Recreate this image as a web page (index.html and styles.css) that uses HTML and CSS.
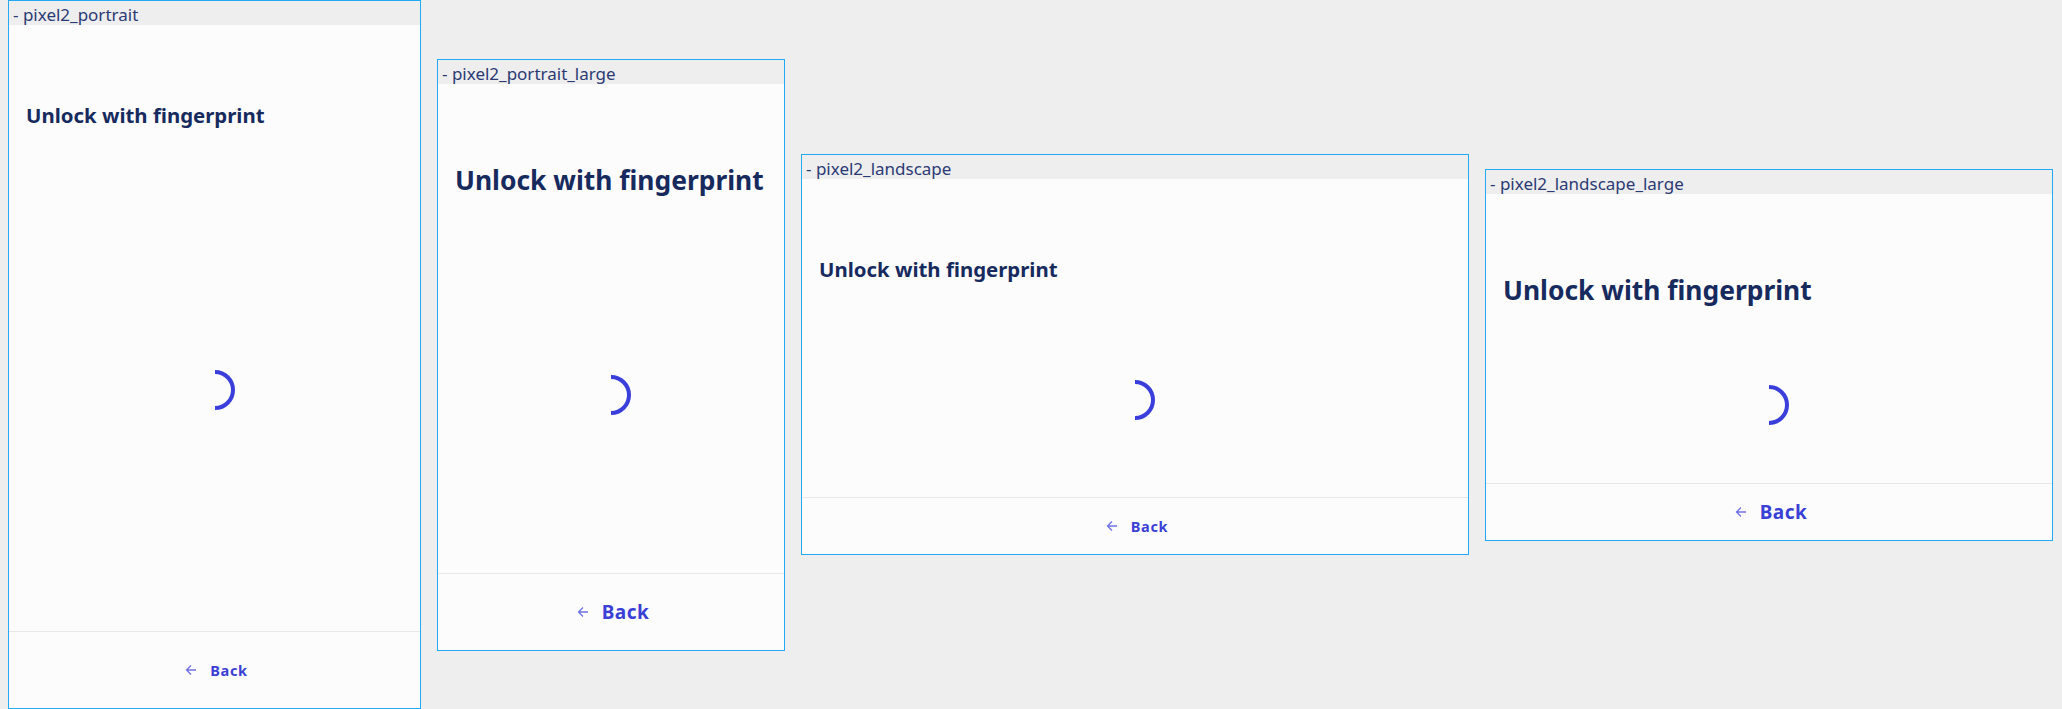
FILE: index.html
```html
<!DOCTYPE html>
<html lang="en">
<head>
<meta charset="utf-8">
<title>Unlock with fingerprint - previews</title>
<link rel="stylesheet" href="styles.css">
</head>
<body>
<main class="canvas">
  <section class="device portrait">
    <div class="label">- pixel2_portrait</div>
    <div class="screen">
      <div class="main">
        <h1 class="title">Unlock with fingerprint</h1>
        <div class="spinner-area">
          <svg class="spinner" viewBox="0 0 40 40" width="40" height="40"><path d="M20 2 A18 18 0 0 1 20 38" fill="none" stroke="#3a3edb" stroke-width="4"/></svg>
        </div>
      </div>
      <div class="footer">
        <button class="back">
          <svg class="arrow" viewBox="0 0 12 12" width="12" height="12"><path d="M11 6H1.5M6 1.5L1.5 6L6 10.5" fill="none" stroke="#6e72e4" stroke-width="1.3"/></svg>
          <span>Back</span>
        </button>
      </div>
    </div>
  </section>

  <section class="device portrait large">
    <div class="label">- pixel2_portrait_large</div>
    <div class="screen">
      <div class="main">
        <h1 class="title">Unlock with fingerprint</h1>
        <div class="spinner-area">
          <svg class="spinner" viewBox="0 0 40 40" width="40" height="40"><path d="M20 2 A18 18 0 0 1 20 38" fill="none" stroke="#3a3edb" stroke-width="4"/></svg>
        </div>
      </div>
      <div class="footer">
        <button class="back">
          <svg class="arrow" viewBox="0 0 12 12" width="12" height="12"><path d="M11 6H1.5M6 1.5L1.5 6L6 10.5" fill="none" stroke="#6e72e4" stroke-width="1.3"/></svg>
          <span>Back</span>
        </button>
      </div>
    </div>
  </section>

  <section class="device landscape">
    <div class="label">- pixel2_landscape</div>
    <div class="screen">
      <div class="main">
        <h1 class="title">Unlock with fingerprint</h1>
        <div class="spinner-area">
          <svg class="spinner" viewBox="0 0 40 40" width="40" height="40"><path d="M20 2 A18 18 0 0 1 20 38" fill="none" stroke="#3a3edb" stroke-width="4"/></svg>
        </div>
      </div>
      <div class="footer">
        <button class="back">
          <svg class="arrow" viewBox="0 0 12 12" width="12" height="12"><path d="M11 6H1.5M6 1.5L1.5 6L6 10.5" fill="none" stroke="#6e72e4" stroke-width="1.3"/></svg>
          <span>Back</span>
        </button>
      </div>
    </div>
  </section>

  <section class="device landscape large">
    <div class="label">- pixel2_landscape_large</div>
    <div class="screen">
      <div class="main">
        <h1 class="title">Unlock with fingerprint</h1>
        <div class="spinner-area">
          <svg class="spinner" viewBox="0 0 40 40" width="40" height="40"><path d="M20 2 A18 18 0 0 1 20 38" fill="none" stroke="#3a3edb" stroke-width="4"/></svg>
        </div>
      </div>
      <div class="footer">
        <button class="back">
          <svg class="arrow" viewBox="0 0 12 12" width="12" height="12"><path d="M11 6H1.5M6 1.5L1.5 6L6 10.5" fill="none" stroke="#6e72e4" stroke-width="1.3"/></svg>
          <span>Back</span>
        </button>
      </div>
    </div>
  </section>
</main>
</body>
</html>
```
FILE: styles.css
```css
* { box-sizing: border-box; }

html, body {
  margin: 0;
  padding: 0;
  background: #eeeeee;
  font-family: "Noto Sans", "Open Sans", sans-serif;
}

.canvas {
  display: flex;
  align-items: center;
  gap: 16px;
  padding: 0 8px;
  height: 709px;
}

.device {
  flex: none;
  display: flex;
  flex-direction: column;
  border: 1px solid #22aaf2;
  background: #fcfcfc;
}

.device.portrait { width: 413px; height: 709px; }
.device.portrait.large { width: 348px; height: 592px; }
.device.landscape { width: 668px; height: 401px; }
.device.landscape.large { width: 568px; height: 372px; }

.label {
  flex: none;
  height: 24px;
  overflow: hidden;
  background: #eeeeee;
  color: #2b3a74;
  font-size: 17px;
  line-height: 24px;
  padding: 2px 0 0 4px;
  white-space: nowrap;
}

.screen {
  flex: 1;
  display: flex;
  flex-direction: column;
  min-height: 0;
}

.main {
  flex: 1;
  display: flex;
  flex-direction: column;
}

.title {
  margin: 0;
  padding: 76px 16px 20px 17px;
  font-size: 20.4px;
  line-height: 28px;
  font-weight: 700;
  color: #172a5e;
}

.large .title {
  padding-top: 78px;
  font-size: 26.4px;
  line-height: 36px;
}

.spinner-area {
  flex: 1;
  display: flex;
  align-items: center;
  justify-content: center;
}

.spinner { display: block; }

.footer {
  flex: none;
  height: 77px;
  border-top: 1px solid #e8e8e8;
  display: flex;
  align-items: center;
  justify-content: center;
}

.landscape .footer { height: 57px; }

.back {
  display: flex;
  align-items: center;
  gap: 13px;
  border: 0;
  background: transparent;
  padding: 0 0 0 4px;
  font-family: "Noto Sans", "Open Sans", sans-serif;
  font-size: 14.5px;
  font-weight: 700;
  letter-spacing: 0.7px;
  color: #3a3fd6;
}

.large .back { font-size: 19px; letter-spacing: 0.5px; }

.arrow { display: block; }
```
